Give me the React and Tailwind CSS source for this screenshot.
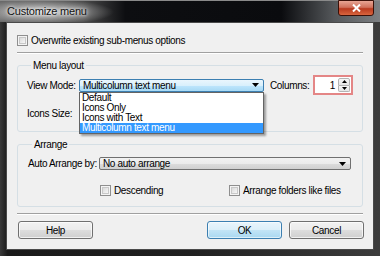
import clsx from "clsx";

const font = "font-['Liberation_Sans',Arial,sans-serif]";

function Arrow({ up = false, className }) {
  return (
    <svg width="7" height="4" viewBox="0 0 7 4" className={className}>
      <path d={up ? "M0 4 L3.5 0 L7 4 Z" : "M0 0 L7 0 L3.5 4 Z"} fill="#000" />
    </svg>
  );
}

function Check({ label, className }) {
  return (
    <div className={clsx("flex items-center gap-[3px]", className)}>
      <div className="w-[11px] h-[11px] shrink-0 border border-[#8f8f8f] bg-[#f4f4f4] p-[1px]">
        <div className="w-full h-full border border-[#c8c8c8] bg-[linear-gradient(135deg,#dadada,#f7f7f7)]" />
      </div>
      <span className="leading-[11px]">{label}</span>
    </div>
  );
}

function Combo({ text, active = false, className, children }) {
  return (
    <div className={clsx("relative shrink-0", className)}>
      <div
        className={clsx(
          "h-[13px] border rounded-[2px] flex items-center pl-[3px] pr-[4px]",
          active
            ? "border-[#3c7fb1] bg-[linear-gradient(#eaf6fd_0%,#d9f0fc_50%,#bee6fd_51%,#a7d9f5_100%)]"
            : "border-[#707070] bg-[linear-gradient(#f2f2f2_0%,#ebebeb_50%,#dddddd_51%,#cfcfcf_100%)]"
        )}
      >
        <span className="flex-1 leading-[11px] truncate">{text}</span>
        <Arrow />
      </div>
      {children}
    </div>
  );
}

function Btn({ children, primary = false, className }) {
  return (
    <button
      className={clsx(
        "w-[75px] h-[18px] rounded-[3px] border leading-[11px] text-black",
        primary
          ? "border-[#3c7fb1] bg-[linear-gradient(#e9f5fc_0%,#dbeff9_50%,#c2e4f6_51%,#a9d8f1_100%)] shadow-[inset_0_0_0_1px_rgba(255,255,255,0.6)]"
          : "border-[#707070] bg-[linear-gradient(#f2f2f2_0%,#ebebeb_50%,#dddddd_51%,#cfcfcf_100%)] shadow-[inset_0_0_0_1px_rgba(255,255,255,0.7)]",
        className
      )}
    >
      {children}
    </button>
  );
}

function Separator({ className }) {
  return <div className={clsx("h-[2px] shrink-0 border-t border-[#a0a0a0] border-b border-b-white", className)} />;
}

export default function App() {
  const items = ["Default", "Icons Only", "Icons with Text", "Multicolumn text menu"];

  return (
    <div className={clsx("w-[380px] h-[256px] bg-[#262626] flex flex-col overflow-hidden text-[10px] tracking-[-0.35px] whitespace-nowrap text-black", font)}>
      {/* title bar */}
      <div className="h-[22px] shrink-0 relative border-t border-[#8a8a8a] bg-[radial-gradient(ellipse_70px_13px_at_44px_11px,rgba(255,255,255,0.7),transparent),linear-gradient(90deg,#6a6a6a_0%,#4a4a4a_22%,#0d0e11_33%,#0a0b0e_74%,#55585b_88%,#7d8083_100%)]">
        <span className="absolute left-[7px] top-[3px] text-[11px] leading-[14px] tracking-[-0.2px] text-[#111] [text-shadow:0_0_6px_#fff,0_0_3px_#fff]">
          Customize menu
        </span>
        <div className="absolute right-[6px] top-[-1px] w-[36px] h-[16px] rounded-b-[3px] border border-[#3b1008] bg-[linear-gradient(#e8a594_0%,#d0715c_45%,#b93a1f_55%,#d8653e_100%)] flex items-center justify-center">
          <svg width="9" height="8" viewBox="0 0 9 8">
            <path d="M1 0.5 L8 7.5 M8 0.5 L1 7.5" stroke="#fff" strokeWidth="2" />
          </svg>
        </div>
      </div>

      {/* frame */}
      <div className="flex-1 min-h-0 px-[6px] pb-[6px] bg-[linear-gradient(90deg,#3a3a3a,#1a1a1a_2%,#202020_50%,#3c3c3c)]">
        <div className="h-full bg-[#f0f0f0] border border-[#4a4a4a] px-[10px] pt-[12px] flex flex-col">
          <Check label="Overwrite existing sub-menus options" />

          <Separator className="mt-[6px]" />

          {/* Menu layout */}
          <fieldset className="mt-[5px] border border-[#d5dfe5] rounded-[3px] pl-[9px] pb-[11px]">
            <legend className="ml-[4px] px-[2px] leading-[13px]">Menu layout</legend>
            <div className="flex items-center mt-[3px] h-[20px]">
              <span className="w-[52px] shrink-0">View Mode:</span>
              <Combo text="Multicolumn text menu" active className="w-[185px] z-10">
                <div className="absolute left-0 top-full w-[185px] border border-[#646464] bg-white shadow-[2px_2px_2px_rgba(0,0,0,0.35)]">
                  {items.map((item, index) => (
                    <div
                      key={index}
                      className={clsx(
                        "h-[10px] leading-[10px] pl-[2px]",
                        index === items.length - 1 && "bg-[#3399ff] text-white"
                      )}
                    >
                      {item}
                    </div>
                  ))}
                </div>
              </Combo>
              <span className="w-[43px] shrink-0 ml-[6px]">Columns:</span>
              <div className="w-[40px] h-[20px] shrink-0 border-2 border-[#e48686] bg-white flex items-center p-[1px]">
                <span className="flex-1 text-right pr-[3px] leading-[11px]">1</span>
                <div className="w-[12px] h-full flex flex-col">
                  <div className="flex-1 border border-[#b4b4b4] rounded-t-[2px] bg-[linear-gradient(#f7f7f7,#e6e6e6)] flex items-center justify-center">
                    <Arrow up className="w-[5px] h-[3px]" />
                  </div>
                  <div className="flex-1 border border-t-0 border-[#b4b4b4] rounded-b-[2px] bg-[linear-gradient(#f7f7f7,#e6e6e6)] flex items-center justify-center">
                    <Arrow className="w-[5px] h-[3px]" />
                  </div>
                </div>
              </div>
            </div>
            <div className="flex items-center mt-[12px] h-[13px]">
              <span className="w-[52px]">Icons Size:</span>
            </div>
          </fieldset>

          {/* Arrange */}
          <fieldset className="mt-[6px] border border-[#d5dfe5] rounded-[3px] pl-[10px] pb-[10px]">
            <legend className="ml-[4px] px-[2px] leading-[13px]">Arrange</legend>
            <div className="flex items-center mt-[5px]">
              <span className="w-[71px] shrink-0">Auto Arrange by:</span>
              <Combo text="No auto arrange" className="w-[252px]" />
            </div>
            <div className="flex items-center mt-[14px]">
              <div className="w-[72px] shrink-0" />
              <Check label="Descending" className="w-[129px] shrink-0" />
              <Check label="Arrange folders like files" />
            </div>
          </fieldset>

          <Separator className="mt-[6px]" />

          <div className="flex items-center mt-[6px] pl-[1px] -mr-[1px]">
            <Btn>Help</Btn>
            <div className="flex-1" />
            <Btn primary>OK</Btn>
            <Btn className="ml-[7px]">Cancel</Btn>
          </div>
        </div>
      </div>
    </div>
  );
}
